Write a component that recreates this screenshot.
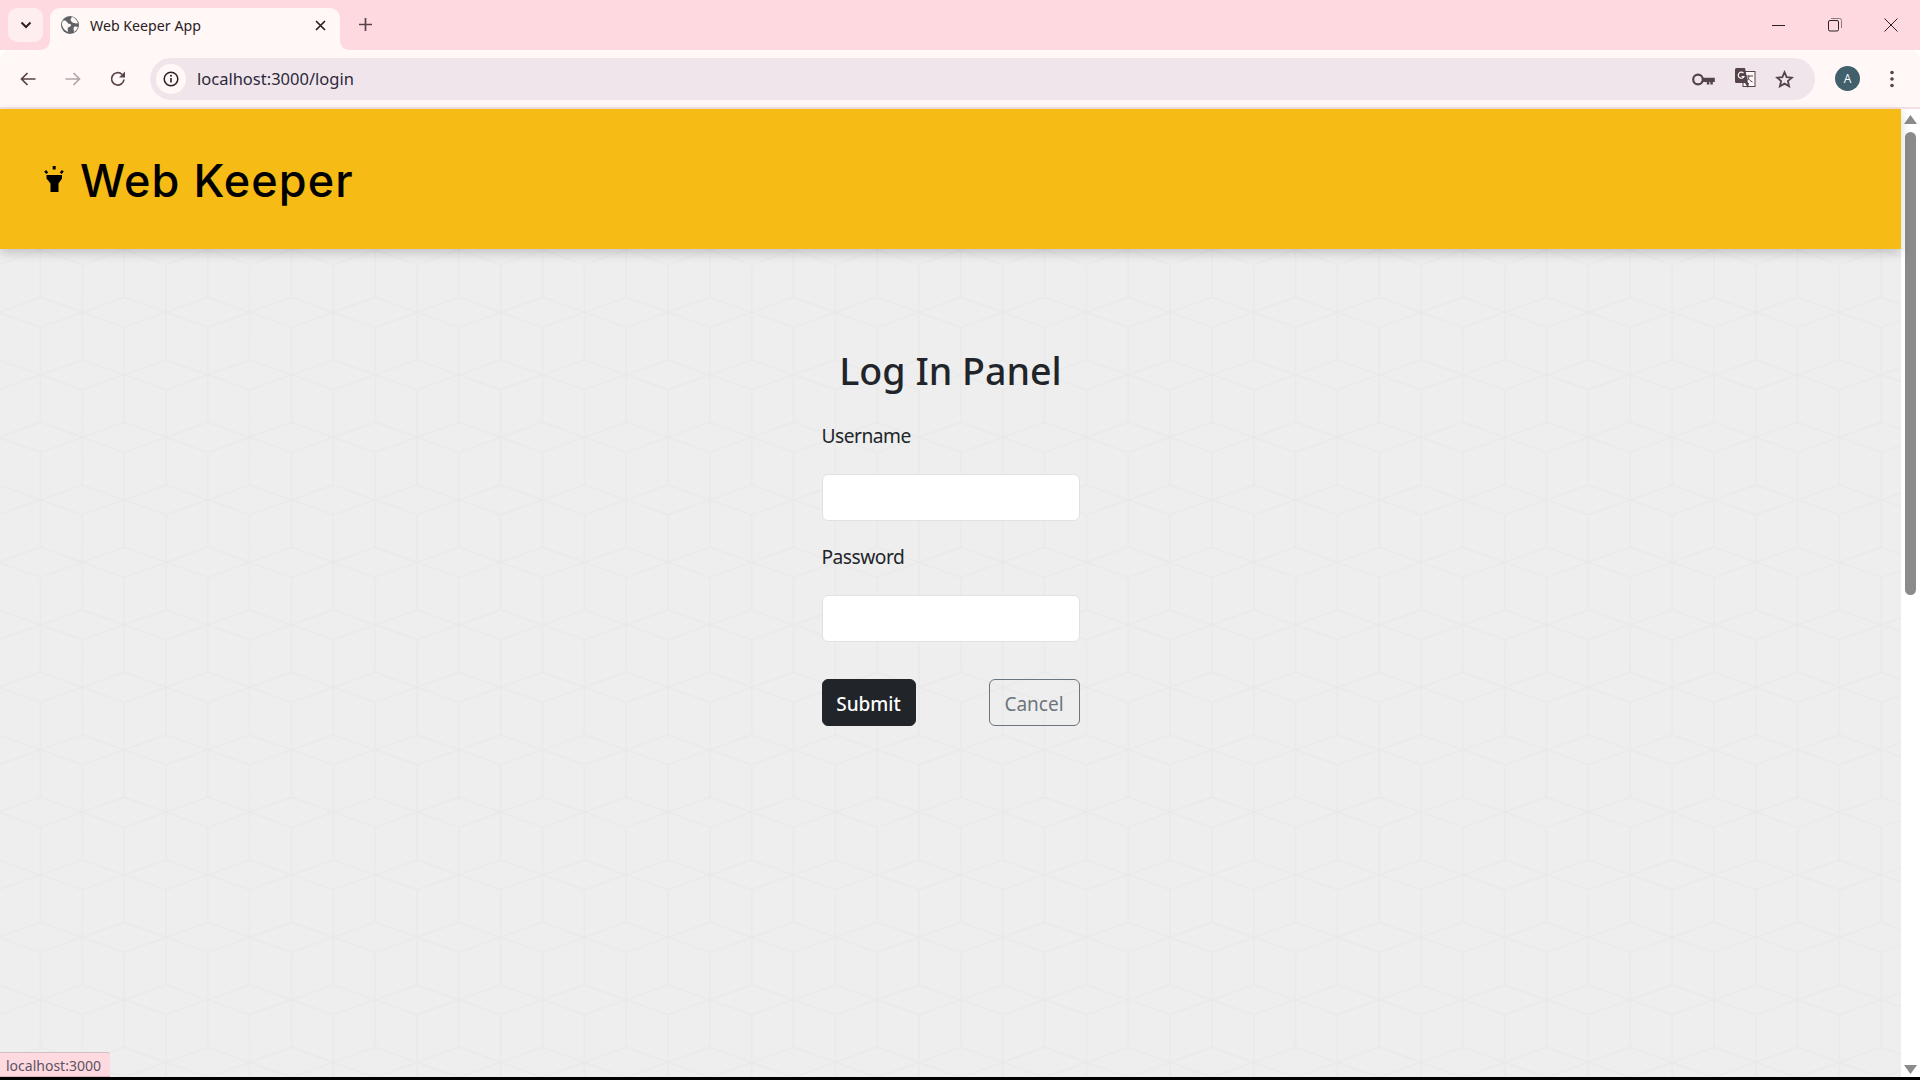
<div class="browser">
  <div class="tabstrip">
    <button class="tabsearch" aria-label="Search tabs">
      <svg width="12" height="8" viewBox="0 0 12 8"><path d="M1.500 1.500 6 6l4.500-4.500" fill="none" stroke="#2b2024" stroke-width="2"/></svg>
    </button>
    <div class="tab">
      <svg class="flare left" width="10" height="10" viewBox="0 0 10 10"><path d="M10 0v10H0c6 0 10-4 10-10z" fill="#fff8f7"/></svg>
      <svg class="globe" width="18" height="18" viewBox="0 0 18 18"><circle cx="9" cy="9" r="9" fill="#5f6368"/><path d="M2 5c2-1 3 0 4 1s1 2 3 2 1 3-1 3-1 3-1 5C5 15 2 13 1 9c0-2 0-3 1-4zM11 1c2 0 5 3 6 6-1 1-3 0-4 0s-2-1-3-2 0-3 1-4zM13 11c1-1 3 0 4 0-1 2-2 4-4 5 0-2-1-4 0-5z" fill="#fff8f7"/></svg>
      <span class="tabtitle">Web Keeper App</span>
      <svg class="tabclose" width="11" height="11" viewBox="0 0 11 11"><path d="M1 1l9 9M10 1l-9 9" stroke="#2b2024" stroke-width="1.700"/></svg>
      <svg class="flare right" width="10" height="10" viewBox="0 0 10 10"><path d="M0 0v10h10C4 10 0 6 0 0z" fill="#fff8f7"/></svg>
    </div>
    <svg class="newtab" width="13" height="13" viewBox="0 0 13 13"><path d="M6.500 0v13M0 6.500h13" stroke="#54434a" stroke-width="1.700"/></svg>
    <div class="winctl">
      <svg width="14" height="14" viewBox="0 0 14 14"><path d="M0 7.500h13" stroke="#2b2024"/></svg>
      <svg width="14" height="14" viewBox="0 0 14 14"><rect x=".5" y="2.500" width="10" height="10.500" rx="1.500" fill="none" stroke="#2b2024"/><path d="M3 .5h8.500a2 2 0 0 1 2 2V10" fill="none" stroke="#8c7a80"/></svg>
      <svg width="14" height="14" viewBox="0 0 14 14"><path d="M.5.5l13 13M13.500.5l-13 13" stroke="#2b2024"/></svg>
    </div>
  </div>

  <div class="toolbar">
    <svg class="navicon" width="16" height="14" viewBox="0 0 16 14"><path d="M15.500 7H1.500M7.500 1 1.500 7l6 6" fill="none" stroke="#5b4148" stroke-width="1.700"/></svg>
    <svg class="navicon fwd" width="16" height="14" viewBox="0 0 16 14"><path d="M.5 7h14M8.500 1l6 6-6 6" fill="none" stroke="#b3a5a9" stroke-width="1.700"/></svg>
    <svg class="navicon reload" width="16" height="16" viewBox="0 0 16 16"><path d="M14 8.500A6.200 6.200 0 1 1 12 3.300" fill="none" stroke="#5b4148" stroke-width="1.700"/><path d="M15 .5V6.500H9z" fill="#5b4148"/></svg>
    <div class="omnibox">
      <span class="chip">
        <svg width="16" height="16" viewBox="0 0 16 16"><circle cx="8" cy="8" r="6.800" fill="none" stroke="#2b2024" stroke-width="1.500"/><path d="M8 7v4.500" stroke="#2b2024" stroke-width="1.600"/><circle cx="8" cy="4.800" r="1" fill="#2b2024"/></svg>
      </span>
      <span class="url">localhost:3000/login</span>
      <span class="omni-icons">
        <svg class="key" width="23" height="13" viewBox="0 0 23 13"><circle cx="6" cy="6.500" r="4.800" fill="none" stroke="#54434a" stroke-width="2.200"/><path d="M10.500 4.800h12.300v4.200h-2v2.500h-2.500V9h-1v2.500h-2.500V9h-4.300z" fill="#54434a"/></svg>
        <svg width="21" height="21" viewBox="0 0 21 21"><rect x="8" y="3.500" width="12" height="15" fill="#fff8f7" stroke="#54434a"/><path d="M1.500 0H10l3 15H1.500A1.500 1.500 0 0 1 0 13.500V1.500A1.500 1.500 0 0 1 1.500 0z" fill="#54434a"/><path d="M8.500 5.200A3 3 0 1 0 9 8.500H6.500" fill="none" stroke="#fff8f7" stroke-width="1.200"/><path d="M11 8h7M14 7.500c0 3-1.500 5-3.500 6M12.500 9.500c1 2 3 3.500 5 4.500" fill="none" stroke="#54434a"/><path d="M10 15l3 5 1-5z" fill="#54434a"/></svg>
        <svg width="19" height="18" viewBox="0 0 19 18"><path d="M9.500 2.200l2.100 4.900 5.300.5-4 3.500 1.200 5.200-4.600-2.700-4.600 2.700 1.200-5.200-4-3.500 5.300-.5z" fill="none" stroke="#54434a" stroke-width="1.800"/></svg>
      </span>
    </div>
    <span class="avatar">A</span>
    <svg class="kebab" width="4" height="18" viewBox="0 0 4 18"><circle cx="2" cy="2.500" r="1.800" fill="#5b4148"/><circle cx="2" cy="9" r="1.800" fill="#5b4148"/><circle cx="2" cy="15.500" r="1.800" fill="#5b4148"/></svg>
  </div>

  <div class="viewport">
    <div class="page">
      <svg class="pattern" width="100%" height="100%" aria-hidden="true">
        <defs>
          <pattern id="hex" width="83.67" height="125" patternUnits="userSpaceOnUse" patternTransform="translate(82.33 78.33)">
            <path d="M0 47.500V0M0 0l41.830 15M83.670 0l-41.830 15M83.670 47.500V0
                     M0 47.500L41.830 62.500L83.670 47.500
                     M0 77.500L41.830 62.500L83.670 77.500
                     M0 77.500V125M83.670 77.500V125
                     M41.830 15V110M0 125l41.830-15 41.830 15" fill="none" stroke="#e8e8e8" stroke-width="1.200"/>
          </pattern>
        </defs>
        <rect width="100%" height="100%" fill="url(#hex)"/>
      </svg>
      <header class="brand">
        <svg class="lamp" width="20" height="27" viewBox="0 0 20 27"><path d="M2.500 9h15.500v3.500l-3.500 5v8.500H6.500v-8.500l-4-5z" fill="#000"/><rect x="8.700" y="0" width="3" height="3.500"/><path d="M.2 5.500l2-1.500 2 2.500-2 1.500zM15.800 6.500l2-2.500 2 1.500-2 2.500z"/></svg>
        <span class="brandname">Web Keeper</span>
      </header>
      <main class="content">
        <form class="login">
          <h1>Log In Panel</h1>
          <label for="u">Username</label>
          <input id="u" type="text" />
          <label for="p" class="second">Password</label>
          <input id="p" type="password" />
          <div class="actions">
            <button type="button" class="submit">Submit</button>
            <button type="button" class="cancel">Cancel</button>
          </div>
        </form>
      </main>
      <div class="status">localhost:3000</div>
    </div>
    <div class="scrollbar">
      <svg width="13" height="9" viewBox="0 0 13 9"><path d="M6.500 0 13 9H0z" fill="#8b8b8b"/></svg>
      <div class="thumb"></div>
      <svg class="down" width="13" height="9" viewBox="0 0 13 9"><path d="M0 0h13L6.500 9z" fill="#8b8b8b"/></svg>
    </div>
  </div>
  <div class="bottom"></div>
</div>

<style>
  :global(body) { margin: 0; background: #fff; }
  .browser {
    width: 1920px; height: 1080px; overflow: hidden;
    display: flex; flex-direction: column;
    font-family: "Open Sans", "Noto Sans", sans-serif;
  }
  .tabstrip {
    height: 50px; flex: none; background: #ffd9e0;
    display: flex; align-items: flex-start; position: relative;
  }
  .tabsearch {
    width: 35px; height: 34px; margin: 8px 0 0 8px; padding: 0; border: 0;
    border-radius: 9px; background: #ffeef0;
    display: flex; align-items: center; justify-content: center;
  }
  .tab {
    position: relative; width: 290px; height: 42px; margin: 8px 0 0 7px;
    background: #fff8f7; border-radius: 10px 10px 0 0;
    display: flex; align-items: center; box-sizing: border-box; padding: 0 14px 8px 11px;
  }
  .flare { position: absolute; bottom: 0; }
  .flare.left { left: -10px; }
  .flare.right { right: -10px; }
  .tabtitle {
    margin-left: 11px; flex: 1; font-size: 14.200px; color: #2b2024; white-space: nowrap;
    font-family: "Noto Sans", sans-serif; 
  }
  .newtab { margin: 18px 0 0 19px; }
  .winctl {
    margin-left: auto; display: flex; gap: 42px; padding: 18px 22px 0 0; 
  }
  .toolbar {
    height: 57px; flex: none; background: #fff8f7;
    border-radius: 10px 10px 0 0; border-bottom: 2px solid #f5dfe3;
    display: flex; align-items: center; box-sizing: content-box;
  }
  .navicon { margin-left: 20px; flex: none; }
  .fwd { margin-left: 29px; }
  .reload { margin-left: 29px; }
  .omnibox {
    margin-left: 24px; width: 1665px; height: 42px; border-radius: 21px;
    background: #f1e5ec; display: flex; align-items: center; flex: none;
  }
  .chip {
    width: 30px; height: 30px; margin-left: 6px; border-radius: 50%; background: #fff8f7;
    display: flex; align-items: center; justify-content: center;
  }
  .url {
    margin-left: 11px; font-size: 16.500px; color: #2b2a3a; white-space: nowrap;
    font-family: "Noto Sans", sans-serif;
  }
  .omni-icons { margin-left: auto; display: flex; align-items: center; gap: 19px; padding-right: 21px; }
  .key { margin-right: 1px; margin-top: 1px; }
  .avatar {
    width: 25px; height: 25px; margin-left: 20px; border-radius: 50%;
    background: #41606c; color: #fff; font-size: 12px; text-align: center; line-height: 25px; flex: none;
  }
  .kebab { margin-left: 30px; flex: none; }
  .viewport { flex: 1; min-height: 0; display: flex; }
  .page {
    flex: 1; position: relative; background: #eeeeee; min-width: 0;
  }
  .pattern { position: absolute; inset: 0; }
  .brand {
    position: relative; height: 140px; background: #f6bb14;
    box-shadow: 0 4px 10px rgba(0,0,0,.18);
    display: flex; align-items: center; box-sizing: border-box; padding-left: 44px;
  }
  .brandname {
    margin-left: 16px; padding-top: 2px; font-family: Inter, sans-serif; font-size: 45px; font-weight: 500; color: #000; line-height: 1;
    letter-spacing: 1.100px;
  }
  .content { position: relative; display: flex; justify-content: center; }
  .login { width: 258px; display: flex; flex-direction: column; }
  h1 {
    margin: 0; padding-top: 98px; text-align: center; font-weight: 500; font-size: 37.600px;
    line-height: 48px; color: #212529; white-space: nowrap; font-family: "Noto Sans", sans-serif;
  }
  label {
    margin-top: 26px; font-size: 19.200px; line-height: 29px; color: #212529;
    font-family: "Noto Sans", sans-serif; letter-spacing: -.5px;
  }
  label.second { margin-top: 21px; }
  input {
    margin-top: 24px; height: 47px; box-sizing: border-box; width: 100%;
    border: 1px solid #dee2e6; border-radius: 6px; background: #fff; padding: 0 12px;
  }
  .actions { display: flex; justify-content: space-between; margin-top: 37px; }
  .actions button {
    height: 47px; border-radius: 6px; font-size: 19px; padding: 2px 0 0;
    font-family: "Noto Sans", sans-serif; box-sizing: border-box;
  }
  .submit { width: 94px; background: #212529; border: 1px solid #212529; color: #fff; font-weight: 500; }
  .cancel { width: 91px; background: transparent; border: 1px solid #6c757d; color: #6c757d; }
  .status {
    position: absolute; left: 0; bottom: 0; height: 25px; width: 110px; box-sizing: border-box;
    background: #ffd9e0; border-top: 1px solid #cfc0c4; border-top-right-radius: 3px;
    border-bottom: 1px solid #d9b7bd;
    font-size: 14px; line-height: 25px; padding-left: 6px; color: #5b5363;
    font-family: "Noto Sans", sans-serif; white-space: nowrap;
  }
  .scrollbar {
    width: 19px; flex: none; background: #fff; display: flex; flex-direction: column; align-items: center;
    padding-top: 6px; box-sizing: border-box;
  }
  .thumb { width: 11px; height: 463px; margin-top: 8px; border-radius: 6px; background: #8b8b8b; }
  .down { margin-top: auto; margin-bottom: 3px; }
  .bottom { height: 3px; flex: none; background: #000; }
</style>
